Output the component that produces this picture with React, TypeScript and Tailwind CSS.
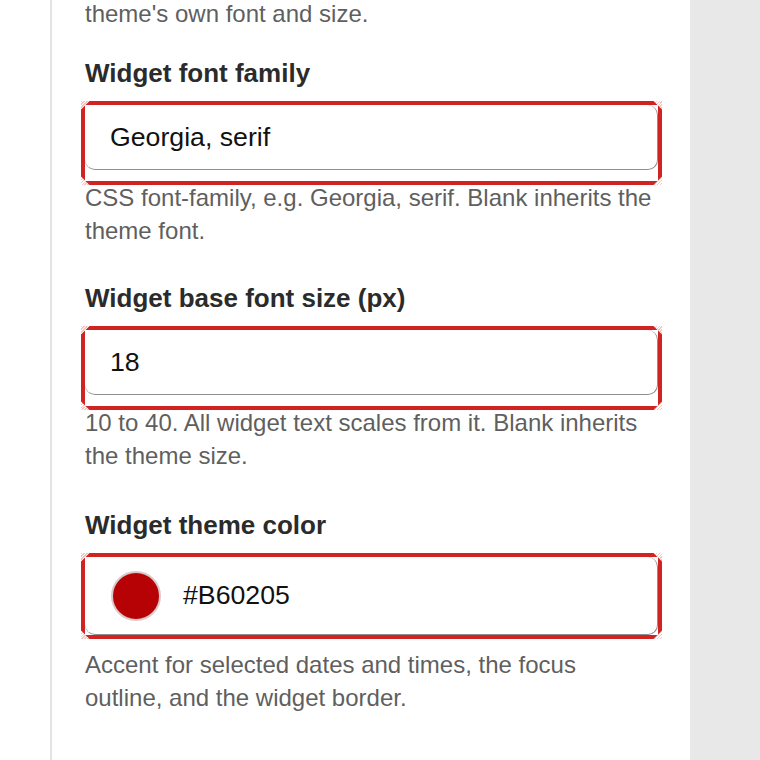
import React from "react";

const font = { fontFamily: '"Liberation Sans", Arial, Helvetica, sans-serif' };

function Corner({ pos }: { pos: string }) {
  return (
    <span
      className={`absolute h-[12px] w-[12px] rotate-45 bg-[repeating-linear-gradient(90deg,#f3c6c6_0_1px,#ffffff_1px_2px)] ${pos}`}
    />
  );
}

function Ring({ bottom }: { bottom: string }) {
  // red highlight drawn over the field
  return (
    <div className={`pointer-events-none absolute -left-[4px] -right-[4px] -top-[4px] overflow-hidden ${bottom}`}>
      <div className="absolute inset-0 border-4 border-[#d22323]" />
      <Corner pos="-left-[6px] -top-[6px]" />
      <Corner pos="-right-[6px] -top-[6px]" />
      <Corner pos="-left-[6px] -bottom-[6px]" />
      <Corner pos="-right-[6px] -bottom-[6px]" />
    </div>
  );
}

function Field({
  label,
  children,
  help,
  helpGap,
  className = "",
}: {
  label: string;
  children: React.ReactNode;
  help: string;
  helpGap: string;
  className?: string;
}) {
  return (
    <div className={className}>
      <label className="block text-[26px] font-bold leading-[34px] text-[#2b2b2b]">{label}</label>
      <div className="relative mt-[15px]">{children}</div>
      <p className={`text-[24px] leading-[33px] text-[#5f5f5f] ${helpGap}`}>{help}</p>
    </div>
  );
}

export default function App() {
  return (
    <div className="flex h-[760px] w-[760px] overflow-hidden bg-white" style={font}>
      <div className="w-[50px] shrink-0 bg-white" />
      <main className="w-[640px] shrink-0 border-l-2 border-[#e3e3e3] bg-white pl-[33px] pr-[32px]">
        <p className="-mt-[3px] text-[24px] leading-[33px] text-[#5f5f5f]">theme's own font and size.</p>

        <Field
          className="mt-[26px]"
          label="Widget font family"
          helpGap="mt-[11px]"
          help="CSS font-family, e.g. Georgia, serif. Blank inherits the theme font."
        >
          <div className="flex h-[65px] items-center rounded-[10px] border-b border-r border-[#8f8f8f] bg-white pl-[25px] text-[26.7px] text-[#111]">
            Georgia, serif
          </div>
          <Ring bottom="-bottom-[15px]" />
        </Field>

        <Field
          className="mt-[34px]"
          label="Widget base font size (px)"
          helpGap="mt-[11px]"
          help="10 to 40. All widget text scales from it. Blank inherits the theme size."
        >
          <div className="flex h-[65px] items-center rounded-[10px] border-b border-r border-[#8f8f8f] bg-white pl-[25px] text-[26.7px] text-[#111]">
            18
          </div>
          <Ring bottom="-bottom-[15px]" />
        </Field>

        <Field
          className="mt-[36px]"
          label="Widget theme color"
          helpGap="mt-[13px]"
          help="Accent for selected dates and times, the focus outline, and the widget border."
        >
          <div className="flex h-[78px] items-center gap-[22px] rounded-[10px] border-b border-r border-[#8f8f8f] bg-white pl-[26px] text-[26.7px] text-[#111]">
            <span className="h-[50px] w-[50px] rounded-full border-2 border-[#d9c9c9] bg-[#B60205]" />
            <span>#B60205</span>
          </div>
          <Ring bottom="-bottom-[4px]" />
        </Field>
      </main>
      <div className="flex-1 bg-[#e8e8e8]" />
    </div>
  );
}
